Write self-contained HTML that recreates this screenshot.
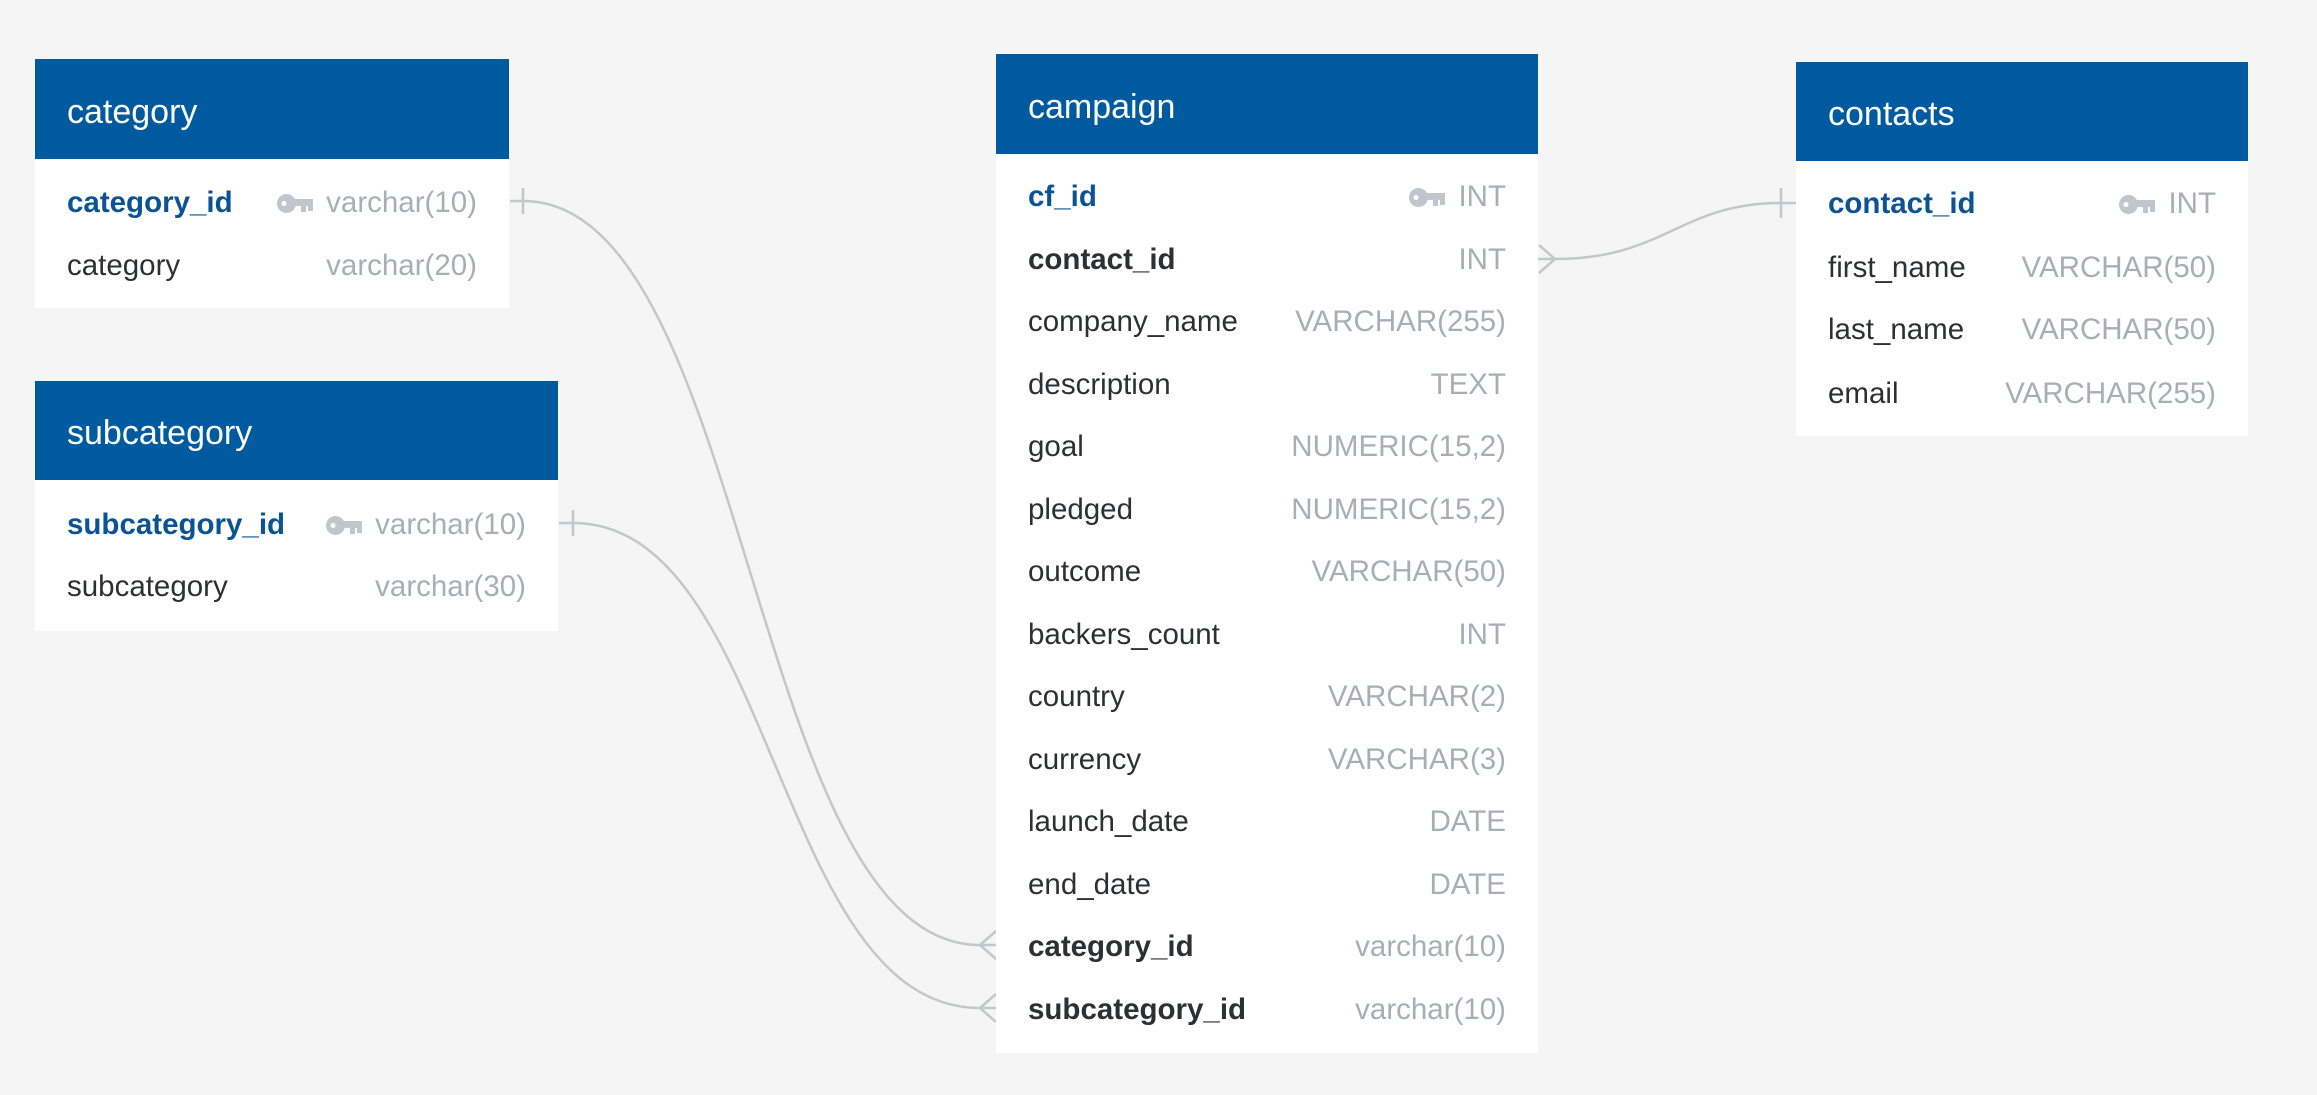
<!DOCTYPE html>
<html><head><meta charset="utf-8"><style>
body{margin:0;width:2317px;height:1095px;background:#f4f5f4;position:relative;overflow:hidden;font-family:"Liberation Sans",Arial,sans-serif;}
.t{position:absolute;background:#fff;}
.h{background:#005aa0;color:#fff;font-size:34px;padding-left:32px;padding-top:6px;box-sizing:border-box;display:flex;align-items:center;}
.r{position:absolute;left:32px;right:32px;height:40px;margin-top:2px;display:flex;align-items:center;justify-content:space-between;font-size:29.5px;color:#2d2f33;}
.r .ty{color:#a9aeb5;display:flex;align-items:center;}
.pk{color:#0b5394;font-weight:bold;}
.fk{font-weight:bold;color:#2d2f33;}
.k{width:36px;height:19px;margin-right:13px;}
</style></head><body>
<svg width="2317" height="1095" style="position:absolute;left:0;top:0" fill="none" stroke="#c4c6c8" stroke-width="2.5">
<path d="M510 201 H523 C750 201 750 945 980 945 H996"/>
<path d="M523 188 V214"/>
<path d="M559 523 H573 C775 523 775 1008 980 1008 H996"/>
<path d="M573 510 V536"/>
<path d="M980 945 L996 931 M980 945 L996 959"/>
<path d="M980 1008 L996 994 M980 1008 L996 1022"/>
<path d="M1538 259 H1555 C1665 259 1680 203 1781 203 H1796"/>
<path d="M1555 259 L1539 245 M1555 259 L1539 273"/>
<path d="M1781 188 V218"/>
</svg>
<svg width="0" height="0" style="position:absolute"><defs><symbol id="key" viewBox="0 0 36 19"><circle cx="9.5" cy="9.5" r="9.5" fill="#c2c6cc"/><circle cx="7" cy="9.5" r="2.5" fill="#fff"/><rect x="15" y="5" width="21" height="7" fill="#c2c6cc"/><rect x="24" y="10" width="5" height="8" fill="#c2c6cc"/><rect x="31" y="10" width="5" height="7" fill="#c2c6cc"/></symbol></defs></svg>

<div class="t" style="left:35px;top:59px;width:474px;height:249px">
<div class="h" style="height:100px">category</div>
<div class="r" style="top:122px"><span class="pk">category_id</span><span class="ty"><svg class="k"><use href="#key"/></svg>varchar(10)</span></div>
<div class="r" style="top:185px"><span>category</span><span class="ty">varchar(20)</span></div>
</div>

<div class="t" style="left:35px;top:381px;width:523px;height:250px">
<div class="h" style="height:99px">subcategory</div>
<div class="r" style="top:122px"><span class="pk">subcategory_id</span><span class="ty"><svg class="k"><use href="#key"/></svg>varchar(10)</span></div>
<div class="r" style="top:184px"><span>subcategory</span><span class="ty">varchar(30)</span></div>
</div>

<div class="t" style="left:996px;top:54px;width:542px;height:999px">
<div class="h" style="height:100px">campaign</div>
<div class="r" style="top:121px"><span class="pk">cf_id</span><span class="ty"><svg class="k"><use href="#key"/></svg>INT</span></div>
<div class="r" style="top:183.5px"><span class="fk">contact_id</span><span class="ty">INT</span></div>
<div class="r" style="top:246px"><span>company_name</span><span class="ty">VARCHAR(255)</span></div>
<div class="r" style="top:308.5px"><span>description</span><span class="ty">TEXT</span></div>
<div class="r" style="top:371px"><span>goal</span><span class="ty">NUMERIC(15,2)</span></div>
<div class="r" style="top:433.5px"><span>pledged</span><span class="ty">NUMERIC(15,2)</span></div>
<div class="r" style="top:496px"><span>outcome</span><span class="ty">VARCHAR(50)</span></div>
<div class="r" style="top:558.5px"><span>backers_count</span><span class="ty">INT</span></div>
<div class="r" style="top:621px"><span>country</span><span class="ty">VARCHAR(2)</span></div>
<div class="r" style="top:683.5px"><span>currency</span><span class="ty">VARCHAR(3)</span></div>
<div class="r" style="top:746px"><span>launch_date</span><span class="ty">DATE</span></div>
<div class="r" style="top:808.5px"><span>end_date</span><span class="ty">DATE</span></div>
<div class="r" style="top:871px"><span class="fk">category_id</span><span class="ty">varchar(10)</span></div>
<div class="r" style="top:933.5px"><span class="fk">subcategory_id</span><span class="ty">varchar(10)</span></div>
</div>

<div class="t" style="left:1796px;top:62px;width:452px;height:374px">
<div class="h" style="height:99px">contacts</div>
<div class="r" style="top:120px"><span class="pk">contact_id</span><span class="ty"><svg class="k"><use href="#key"/></svg>INT</span></div>
<div class="r" style="top:184px"><span>first_name</span><span class="ty">VARCHAR(50)</span></div>
<div class="r" style="top:246px"><span>last_name</span><span class="ty">VARCHAR(50)</span></div>
<div class="r" style="top:310px"><span>email</span><span class="ty">VARCHAR(255)</span></div>
</div>
</body></html>
